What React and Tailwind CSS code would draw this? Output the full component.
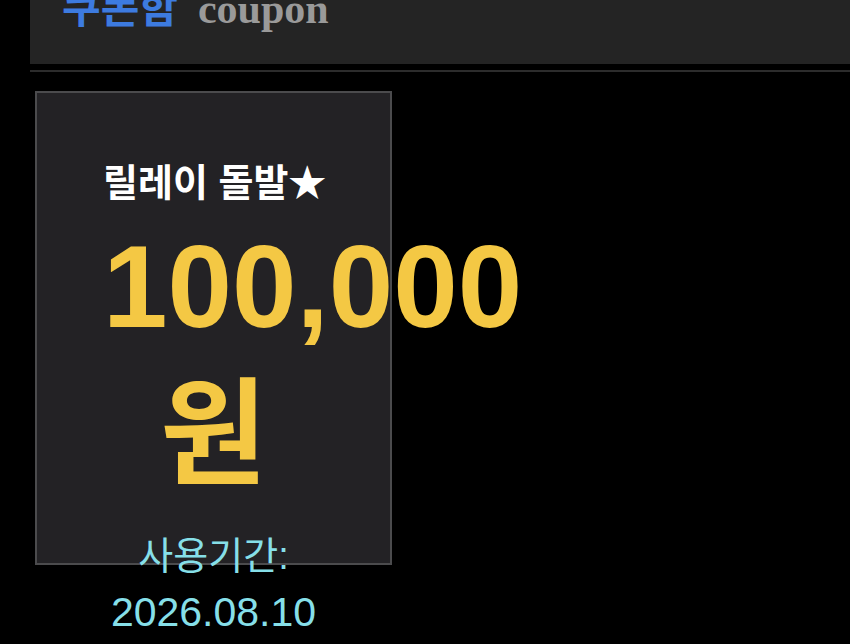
export default function App() {
  return (
    <div className="min-h-[644px] w-[850px] overflow-hidden bg-black font-['Liberation_Sans','Noto_Sans_CJK_KR',sans-serif]">
      {/* header bar, scrolled so the title is cut at the top */}
      <div className="ml-[30px] h-[64px] overflow-hidden bg-[#242424]">
        <div className="-mt-[12px] ml-[32px] flex items-baseline gap-[20px] text-[42px] leading-none font-bold">
          <span className="text-[#3d7be0]">쿠폰함</span>
          <span className="font-['Liberation_Serif',serif] text-[#9a9a9a]">coupon</span>
        </div>
      </div>
      <div className="ml-[30px] mt-[6px] h-[2px] bg-[#2c2c2c]" />

      <div className="ml-[35px] mt-[19px] h-[474px] w-[357px] border-2 border-[#4b4b4d] bg-[#232225] px-[66px] pt-[68px] text-center">
        <div className="whitespace-nowrap text-[38px] leading-[1.2] font-bold text-white">릴레이 돌발★</div>
        <div className="mt-[14px] text-[116px] leading-[1.15] font-bold text-[#f4c844]">
          <div className="whitespace-nowrap text-left">100,000</div>
          <div className="mt-[15px]">원</div>
        </div>
        <div className="mt-[30px] whitespace-nowrap text-[38px] leading-[1.3] text-[#86dfe8]">사용기간:</div>
        <div className="mt-[6px] whitespace-nowrap text-[41px] leading-[1.2] text-[#86dfe8]">2026.08.10</div>
      </div>
    </div>
  );
}
